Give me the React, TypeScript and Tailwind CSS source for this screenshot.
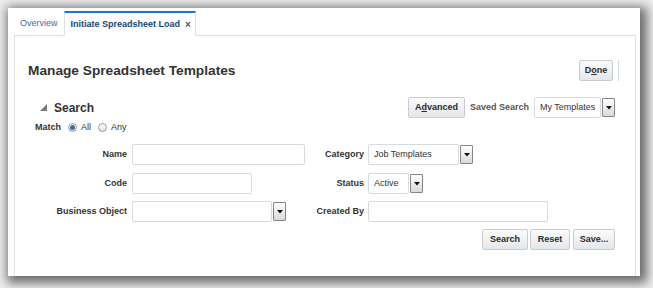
const font = "font-['Liberation_Sans',Arial,sans-serif]";

const btn =
    "h-[21px] flex items-center justify-center rounded-[2px] border border-[#c5cdd4] bg-linear-to-b from-[#fbfbfc] to-[#e3e7ea] text-[9px] font-bold text-[#2b2b2b]";

const inputBox = "h-[21px] rounded-[2px] border border-[#d4dbe1] bg-white";

const DropButton = () => (
    <div className="ml-px flex h-[19px] w-[13px] items-center justify-center rounded-[1px] border border-[#858585] bg-linear-to-b from-white to-[#d9d9d9]">
        <svg width="6" height="4" viewBox="0 0 6 4">
            <polygon points="0,0 6,0 3,3.5" fill="#111" />
        </svg>
    </div>
);

const Select = ({ value, width }: { value: string; width: string }) => (
    <div className="flex items-center">
        <div className={`${inputBox} ${width} flex items-center pl-[5px] text-[9px] text-[#333]`}>
            {value}
        </div>
        <DropButton />
    </div>
);

const Radio = ({ checked }: { checked?: boolean }) => (
    <div className="flex h-[9px] w-[9px] items-center justify-center rounded-full border border-[#9a9a9a] bg-linear-to-b from-white to-[#e2e2e2]">
        {checked && <div className="h-[5px] w-[5px] rounded-full bg-[#2f6fb6]" />}
    </div>
);

const Label = ({ children, width }: { children: string; width: string }) => (
    <div className={`${width} text-right text-[9px] font-bold text-[#333]`}>{children}</div>
);

const App = () => {
    return (
        <div className={`h-[288px] w-[653px] bg-[#eeeeee] pl-[8px] pt-[8px] ${font}`}>
            <div className="flex h-[268px] w-[632px] flex-col bg-white shadow-[3px_3px_10px_4px_rgba(0,0,0,0.55)]">
                {/* tabs */}
                <div className="relative z-10 -mb-px flex pl-[6px] pt-[3px]">
                    <div className="flex h-[25px] items-center px-[6px] text-[9px] text-[#3b6ea8]">
                        Overview
                    </div>
                    <div className="flex h-[25px] items-center gap-[5px] border-x border-t-2 border-x-[#dbe2e8] border-t-[#1f73cf] bg-white pl-[6px] pr-[4px] text-[9px] font-bold text-[#0f4579]">
                        Initiate Spreadsheet Load
                        <span className="text-[10px] font-bold text-[#555]">×</span>
                    </div>
                </div>

                {/* panel */}
                <div className="ml-[6px] mr-[4px] flex-1 border-x border-t border-[#dbe2e8] pl-[13px] pr-[16px] pt-[24px]">
                    <div className="flex h-[21px] items-center justify-between">
                        <h1 className="pt-px text-[13.7px] font-bold text-[#333]">Manage Spreadsheet Templates</h1>
                        <div className="flex items-center gap-[5px]">
                            <div className={`${btn} w-[34px]`}>
                                D<u>o</u>ne
                            </div>
                            <div className="h-[21px] w-px bg-[#d5d9dd]" />
                        </div>
                    </div>

                    <div className="mr-[4px] mt-[16px]">
                        {/* search header */}
                        <div className="flex h-[21px] items-center justify-between">
                            <div className="flex items-center gap-[7px] pl-[12px]">
                                <svg width="7" height="7" viewBox="0 0 7 7">
                                    <polygon points="7,0 7,7 0,7" fill="#7a7a7a" />
                                </svg>
                                <span className="text-[12px] font-bold text-[#333]">Search</span>
                            </div>
                            <div className="flex items-center">
                                <div className={`${btn} w-[57px]`}>
                                    A<u>d</u>vanced
                                </div>
                                <span className="ml-[5px] text-[9px] font-bold text-[#555]">Saved Search</span>
                                <div className="ml-[5px]">
                                    <Select value="My Templates" width="w-[67px]" />
                                </div>
                            </div>
                        </div>

                        {/* match */}
                        <div className="mt-[3px] flex h-[13px] items-center pl-[7px] text-[9px] text-[#333]">
                            <span className="font-bold">Match</span>
                            <div className="ml-[7px]">
                                <Radio checked />
                            </div>
                            <span className="ml-[4px]">All</span>
                            <div className="ml-[7px]">
                                <Radio />
                            </div>
                            <span className="ml-[4px]">Any</span>
                        </div>

                        {/* form */}
                        <div className="mt-[10px] flex flex-col">
                            <div className="flex h-[21px] items-center">
                                <Label width="w-[99px]">Name</Label>
                                <div className="ml-[5px] w-[178px]">
                                    <div className={`${inputBox} w-[173px]`} />
                                </div>
                                <Label width="w-[54px]">Category</Label>
                                <div className="ml-[4px]">
                                    <Select value="Job Templates" width="w-[91px]" />
                                </div>
                            </div>
                            <div className="mt-[8px] flex h-[21px] items-center">
                                <Label width="w-[99px]">Code</Label>
                                <div className="ml-[5px] w-[178px]">
                                    <div className={`${inputBox} w-[120px]`} />
                                </div>
                                <Label width="w-[54px]">Status</Label>
                                <div className="ml-[4px]">
                                    <Select value="Active" width="w-[41px]" />
                                </div>
                            </div>
                            <div className="mt-[7px] flex h-[21px] items-center">
                                <Label width="w-[99px]">Business Object</Label>
                                <div className="ml-[5px] w-[178px]">
                                    <Select value="" width="w-[140px]" />
                                </div>
                                <Label width="w-[54px]">Created By</Label>
                                <div className="ml-[4px]">
                                    <div className={`${inputBox} w-[180px]`} />
                                </div>
                            </div>
                        </div>

                        {/* buttons */}
                        <div className="mt-[7px] flex justify-end gap-[2px]">
                            <div className={`${btn} w-[46px]`}>Search</div>
                            <div className={`${btn} w-[40px]`}>Reset</div>
                            <div className={`${btn} ml-px w-[42px]`}>Save...</div>
                        </div>
                    </div>
                </div>
            </div>
        </div>
    );
};

export default App;
